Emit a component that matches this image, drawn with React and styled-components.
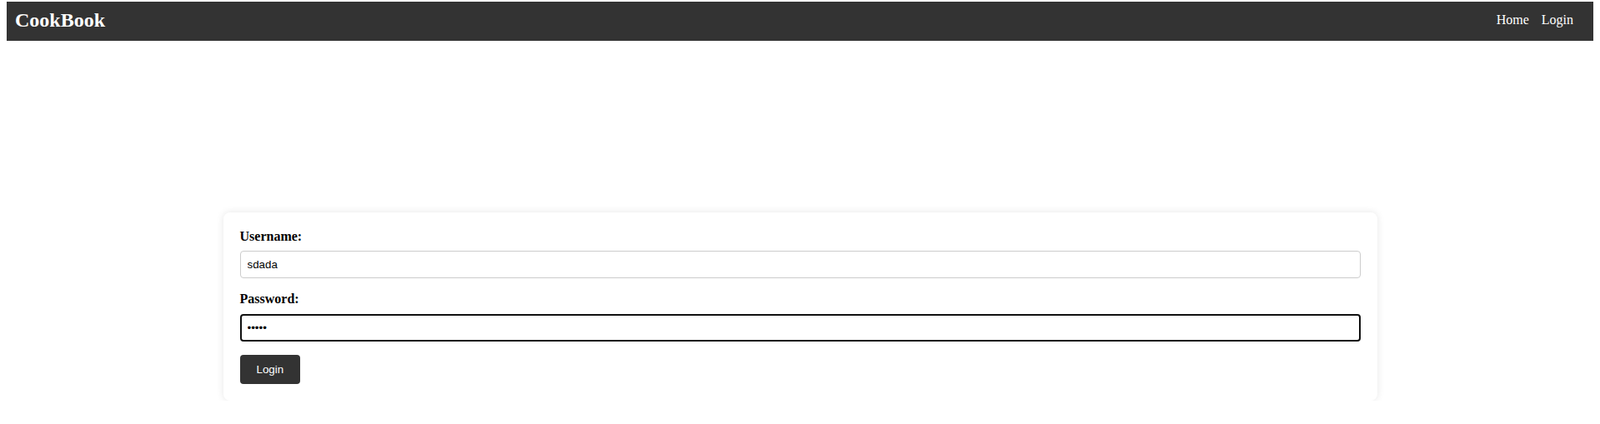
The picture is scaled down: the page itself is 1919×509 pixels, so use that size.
import React from "react";
import styled, { createGlobalStyle } from "styled-components";

const GlobalStyle = createGlobalStyle`
  html, body { background: #fff; }
  body {
    margin: 2px 8px 8px;
    font-family: "Liberation Serif", "Times New Roman", serif;
    color: #000;
  }
`;

const Header = styled.header`
  display: flex;
  align-items: center;
  justify-content: space-between;
  height: 47px;
  padding: 0 24px 0 10px;
  background: #333;
  color: #fff;
`;

const Brand = styled.h1`
  margin: 0;
  font-size: 24px;
  font-weight: bold;
  line-height: 1;
  padding-bottom: 4px;
`;

const Nav = styled.nav`
  display: flex;
  gap: 15px;
  font-size: 16px;
  padding-bottom: 4px;
`;

const NavLink = styled.a`
  color: #fff;
  text-decoration: none;
  cursor: pointer;
`;

const Main = styled.main`
  padding-top: 206px;
  display: flex;
  justify-content: center;
`;

const Card = styled.form`
  width: 1384px;
  box-sizing: border-box;
  padding: 20px;
  background: #fff;
  border-radius: 8px;
  box-shadow: 0 0 10px rgba(0, 0, 0, 0.1);
`;

const Group = styled.div`
  margin-bottom: 16px;
`;

const Label = styled.label`
  display: block;
  margin-bottom: 8px;
  font-size: 16px;
  font-weight: bold;
  line-height: 18.4px;
`;

const Input = styled.input`
  display: block;
  width: 100%;
  box-sizing: border-box;
  height: 33px;
  padding: ${(p) => (p.$focused ? "7px" : "8px")};
  border: ${(p) => (p.$focused ? "2px solid #101010" : "1px solid #ccc")};
  border-radius: 4px;
  font-family: "Liberation Sans", Arial, sans-serif;
  font-size: 13.333px;
  color: #000;
  outline: none;
`;

const Button = styled.button`
  display: block;
  height: 35px;
  padding: 0 20px;
  border: none;
  border-radius: 4px;
  background: #333;
  color: #fff;
  font-family: "Liberation Sans", Arial, sans-serif;
  font-size: 13.333px;
  cursor: pointer;
`;

export default function App() {
  return (
    <>
      <GlobalStyle />
      <Header>
        <Brand>CookBook</Brand>
        <Nav>
          <NavLink>Home</NavLink>
          <NavLink>Login</NavLink>
        </Nav>
      </Header>
      <Main>
        <Card onSubmit={(e) => e.preventDefault()}>
          <Group>
            <Label htmlFor="username">Username:</Label>
            <Input id="username" type="text" defaultValue="sdada" />
          </Group>
          <Group>
            <Label htmlFor="password">Password:</Label>
            <Input id="password" type="password" defaultValue="sdada" $focused />
          </Group>
          <Button type="submit">Login</Button>
        </Card>
      </Main>
    </>
  );
}
